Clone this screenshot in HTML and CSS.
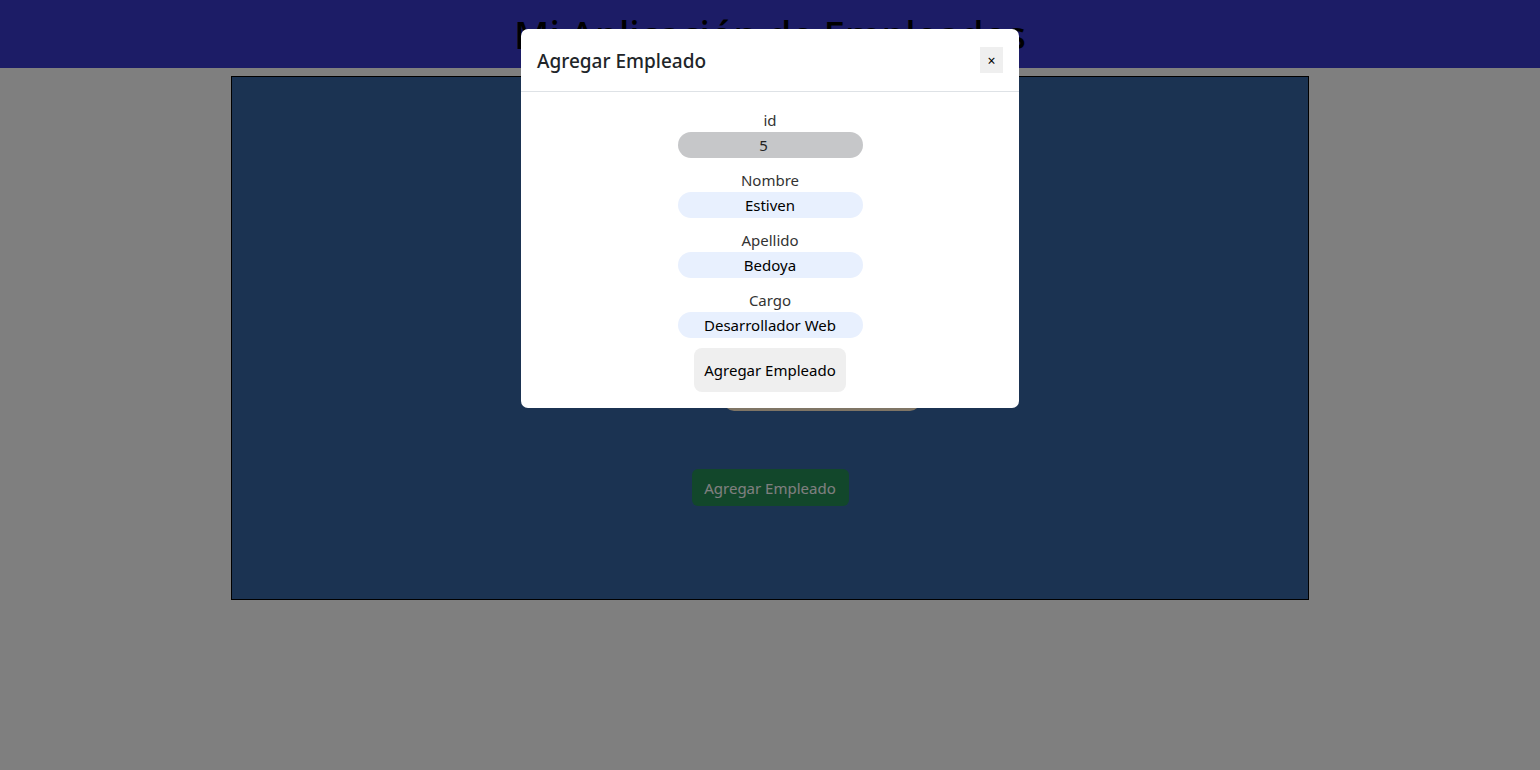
FILE: index.html
```html
<!DOCTYPE html>
<html lang="es">
<head>
<meta charset="utf-8">
<title>Mi Aplicación de Empleados</title>
<link rel="stylesheet" href="styles.css">
</head>
<body>
<header class="topbar">
  <h1 class="app-title">Mi Aplicación de Empleados</h1>
</header>
<main class="panel">
  <button class="btn-list">Ver Empleados</button>
  <button class="btn-add">Agregar Empleado</button>
</main>

<div class="backdrop"></div>
<div class="modal">
  <div class="modal-header">
    <h5 class="modal-title">Agregar Empleado</h5>
    <button class="close-btn">×</button>
  </div>
  <form class="modal-body">
    <div class="field">
      <label class="field-label">id</label>
      <input class="field-input field-input--disabled id-input" type="text" value="5" disabled>
    </div>
    <div class="field">
      <label class="field-label">Nombre</label>
      <input class="field-input" type="text" value="Estiven">
    </div>
    <div class="field">
      <label class="field-label">Apellido</label>
      <input class="field-input" type="text" value="Bedoya">
    </div>
    <div class="field">
      <label class="field-label">Cargo</label>
      <input class="field-input" type="text" value="Desarrollador Web">
    </div>
    <button type="button" class="submit-btn">Agregar Empleado</button>
  </form>
</div>
</body>
</html>
```
FILE: styles.css
```css
* { box-sizing: border-box; }
html, body { margin: 0; padding: 0; }
body {
  background: #ffffff;
  font-family: "Segoe UI", "Noto Sans", "Open Sans", sans-serif;
  font-size: 15px;
  color: #212529;
  height: 770px;
  overflow: hidden;
}
.topbar {
  height: 68px;
  background: #3838cc;
  display: flex;
  justify-content: center;
  align-items: center;
}
.app-title {
  margin: 0;
  font-size: 38.5px;
  font-weight: 500;
  color: #000;
  line-height: 1.2;
}
.panel {
  width: 1078px;
  height: 524px;
  margin: 8px auto 0;
  border: 1px solid #000;
  background: #3666a4;
  display: flex;
  flex-direction: column;
  align-items: center;
  padding-top: 290px;
}
.btn-list {
  width: 196px;
  height: 44px;
  margin-left: 104px;
  border: none;
  border-radius: 10px;
  background: #feeaca;
  font: inherit;
}
.btn-add {
  margin-top: 58px;
  width: 157px;
  height: 37px;
  border: none;
  border-radius: 6px;
  background: #248e56;
  color: #fff;
  font: inherit;
}
.backdrop {
  position: fixed;
  inset: 0;
  background: rgba(0, 0, 0, 0.5);
}
.modal {
  position: fixed;
  top: 29px;
  left: 521px;
  width: 498px;
  background: #fff;
  border-radius: 7px;
}
.modal-header {
  display: flex;
  align-items: center;
  justify-content: space-between;
  padding: 17px 16px 15px;
  border-bottom: 1px solid #dee2e6;
  height: 63px;
}
.modal-title {
  margin: 0;
  font-size: 19px;
  font-weight: 500;
  line-height: 30px;
  color: #212529;
}
.close-btn {
  width: 23px;
  height: 26px;
  padding: 0;
  border: none;
  background: #efefef;
  font-family: "Segoe UI", "Noto Sans", sans-serif;
  font-size: 14px;
  color: #000;
  margin-top: -2px;
}
.modal-body {
  margin: 0;
  padding: 16px;
  display: flex;
  flex-direction: column;
  align-items: center;
}
.field {
  display: flex;
  flex-direction: column;
  align-items: center;
  margin-bottom: 10px;
}
.field-label {
  line-height: 24px;
  color: #333;
}
.field-input {
  width: 185px;
  height: 26px;
  border: none;
  border-radius: 13px;
  background: #e8f0fe;
  text-align: center;
  font: inherit;
  color: #000;
  padding: 0;
  outline: none;
}
.field-input--disabled {
  background: #c6c7c9;
  color: #222;
}
.id-input { padding-right: 13px; }
.submit-btn {
  width: 152px;
  height: 44px;
  border: none;
  border-radius: 8px;
  background: #efefef;
  font: inherit;
  color: #000;
  padding: 0;
}
```
